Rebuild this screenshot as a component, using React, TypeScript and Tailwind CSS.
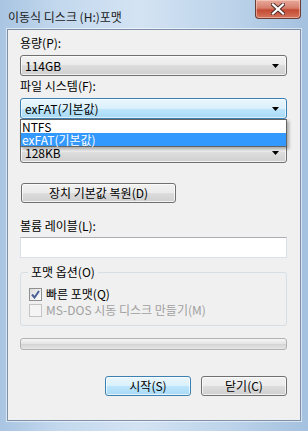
import React from "react";

const Arrow = () => (
  <svg width="7" height="4" viewBox="0 0 7 4" className="block">
    <path d="M0 0H7L3.5 4Z" fill="#000" />
  </svg>
);

function Select({ text, focused }: { text: string; focused?: boolean }) {
  return (
    <div
      className={
        focused
          ? "h-[21px] w-[267px] rounded-[3px] border border-[#3c7fb1] bg-[linear-gradient(#eaf6fd,#d9f0fc_50%,#bee6fd_50%,#a7d9f5)] flex items-center justify-between pl-[4px] pr-[7px] shadow-[inset_0_0_0_1px_rgba(255,255,255,0.6)]"
          : "h-[21px] w-[267px] rounded-[3px] border border-[#707070] bg-[linear-gradient(#f2f2f2,#ebebeb_50%,#dddddd_50%,#cfcfcf)] flex items-center justify-between pl-[4px] pr-[7px] shadow-[inset_0_0_0_1px_rgba(255,255,255,0.7)]"
      }
    >
      <span>{text}</span>
      <Arrow />
    </div>
  );
}

function Button({ text, def, w }: { text: string; def?: boolean; w: string }) {
  return (
    <div
      className={
        (def
          ? "border-[#3c7fb1] bg-[linear-gradient(#eaf6fd,#d9f0fc_50%,#bee6fd_50%,#a7d9f5)] "
          : "border-[#707070] bg-[linear-gradient(#f2f2f2,#ebebeb_50%,#dddddd_50%,#cfcfcf)] ") +
        w +
        " h-[20px] rounded-[3px] border flex items-center justify-center shadow-[inset_0_0_0_1px_rgba(255,255,255,0.7)]"
      }
    >
      {text}
    </div>
  );
}

function CloseBtn() {
  return (
    <div className="w-[46px] h-[19px] rounded-b-[4px] border border-t-0 border-[#6b3b35] bg-[linear-gradient(#e9a99b,#d57f6c_45%,#c44a33_55%,#d5745c)] flex items-center justify-center shadow-[inset_0_0_0_1px_rgba(255,220,210,0.5)]">
      <svg width="14" height="12" viewBox="0 0 14 12">
        <path d="M2 1.5L12 10.5M12 1.5L2 10.5" stroke="#4a2b2b" strokeWidth="4" strokeLinecap="square" />
        <path d="M2 1.5L12 10.5M12 1.5L2 10.5" stroke="#ffffff" strokeWidth="2.2" strokeLinecap="square" />
      </svg>
    </div>
  );
}

function Check({ checked, disabled }: { checked?: boolean; disabled?: boolean }) {
  return (
    <div
      className={
        (disabled ? "border-[#c4c4c4] bg-[#f4f4f4] " : "border-[#8e8f8f] bg-[linear-gradient(135deg,#dcdcdc,#fdfdfd)] ") +
        "w-[13px] h-[13px] border flex items-center justify-center"
      }
    >
      {checked && (
        <svg width="9" height="9" viewBox="0 0 9 9">
          <path d="M1 4.5L3.5 7.5L8 1" stroke="#4a5f97" strokeWidth="2" fill="none" />
        </svg>
      )}
    </div>
  );
}

export default function App() {
  return (
    <div className="w-[308px] h-[431px] overflow-hidden flex flex-col bg-[linear-gradient(90deg,#a9c5e2,#c4d9ee_20%,#d3e3f3_45%,#bcd3ea_75%,#a4c1df)] font-['Noto_Sans_CJK_KR','Noto_Sans',sans-serif] text-[12px] leading-[14px] text-black">
      <div className="h-[29px] flex items-start justify-between pl-[8px] pr-[7px]">
        <div className="mt-[10px] text-[#1b1b1b]">이동식 디스크 (H:)포맷</div>
        <CloseBtn />
      </div>
      <div className="mx-[7px] h-[392px] border border-[#7d90a8] bg-[#f0f0f0] px-[12px] flex flex-col shadow-[0_0_0_1px_rgba(255,255,255,0.55)]">
        <div className="mt-[6px]">용량(P):</div>
        <div className="mt-[5px]">
          <Select text="114GB" />
        </div>
        <div className="mt-[3px]">파일 시스템(F):</div>
        <div className="mt-[5px] relative z-10">
          <Select text="exFAT(기본값)" focused />
          <div className="absolute left-0 top-full w-[267px] bg-white border border-[#646464] shadow-[2px_2px_3px_rgba(0,0,0,0.3)]">
            <div className="h-[13px] leading-[13px] pl-[1px]">NTFS</div>
            <div className="h-[13px] leading-[13px] pl-[1px] bg-[#3399ff] text-white">exFAT(기본값)</div>
          </div>
        </div>
        <div className="mt-[4px] h-[14px]" />
        <div className="mt-[5px]">
          <Select text="128KB" />
        </div>
        <div className="mt-[20px] ml-[1px]">
          <Button text="장치 기본값 복원(D)" w="w-[155px]" />
        </div>
        <div className="mt-[16px]">볼륨 레이블(L):</div>
        <div className="mt-[4px] h-[21px] w-[267px] bg-white border border-[#dbdfe6] border-t-[#abadb3]" />
        <div className="mt-[14px] relative w-[267px] h-[54px] rounded-[3px] border border-[#d5dfe5] pl-[8px] pt-[14px] flex flex-col gap-[2px]">
          <div className="absolute left-[7px] top-[-8px] px-[3px] bg-[#f0f0f0]">포맷 옵션(O)</div>
          <div className="flex items-center gap-[4px] h-[14px]">
            <Check checked />
            <span>빠른 포맷(Q)</span>
          </div>
          <div className="flex items-center gap-[4px] h-[14px] text-[#a0a0a0]">
            <Check disabled />
            <span>MS-DOS 시동 디스크 만들기(M)</span>
          </div>
        </div>
        <div className="mt-[12px] h-[12px] w-[267px] rounded-[3px] border border-[#b2b2b2] bg-[linear-gradient(#f6f6f6,#e2e2e2_50%,#d4d4d4_55%,#e6e6e6)]" />
        <div className="mt-[26px] w-[267px] flex justify-end gap-[10px]">
          <Button text="시작(S)" def w="w-[86px]" />
          <Button text="닫기(C)" w="w-[86px]" />
        </div>
      </div>
    </div>
  );
}
